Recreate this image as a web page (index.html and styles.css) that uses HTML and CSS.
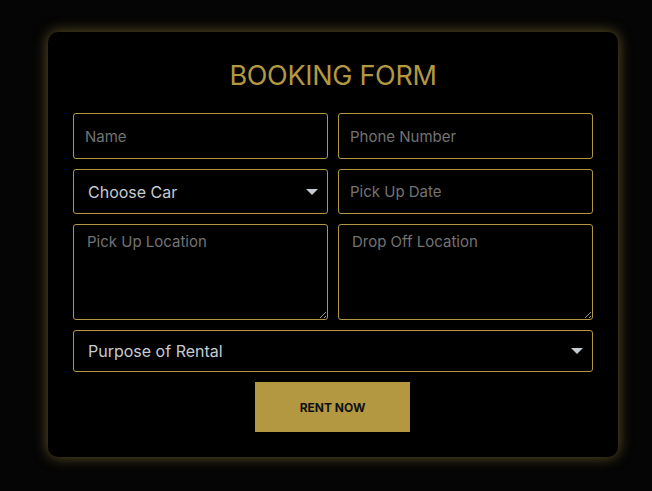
FILE: index.html
```html
<!DOCTYPE html>
<html lang="en">
<head>
    <meta charset="UTF-8">
    <meta name="viewport" content="width=device-width, initial-scale=1.0">
    <title>Booking Form</title>
    <link rel="stylesheet" href="styles.css">
</head>
<body>
    <div class="booking">
        <h2>BOOKING FORM</h2>
        <form class="booking-form">
            <input class="field row1" type="text" placeholder="Name">
            <input class="field row1" type="text" placeholder="Phone Number">
            <div class="select-wrap">
                <select class="field row2">
                    <option>Choose Car</option>
                </select>
            </div>
            <input class="field row2" type="text" placeholder="Pick Up Date">
            <textarea class="field area" placeholder="Pick Up Location"></textarea>
            <textarea class="field area" placeholder="Drop Off Location"></textarea>
            <div class="select-wrap wide">
                <select class="field row4">
                    <option>Purpose of Rental</option>
                </select>
            </div>
            <div class="actions wide">
                <button type="button" class="rent-btn">RENT NOW</button>
            </div>
        </form>
    </div>
</body>
</html>
```

FILE: styles.css
```css
body {
    margin: 0;
    background: #050505;
    font-family: 'Inter', 'Roboto', sans-serif;
    height: 491px;
    overflow: hidden;
}
.booking {
    width: 570px;
    box-sizing: border-box;
    margin: 32px 0 0 48px;
    padding: 0 25px 25px;
    background: #000;
    border-radius: 10px;
    box-shadow: 0 0 14px rgba(179, 152, 65, 0.55);
}
h2 {
    margin: 0;
    padding: 28px 0 21px;
    text-align: center;
    font-size: 27px;
    font-weight: 400;
    line-height: 32px;
    color: #b39841;
    letter-spacing: -0.3px;
}
.booking-form {
    display: grid;
    grid-template-columns: 255px 255px;
    gap: 10px;
}
.field {
    box-sizing: border-box;
    width: 100%;
    background: #000;
    border: 1px solid #b39841;
    border-radius: 3px;
    color: #c9ccd1;
    font-family: inherit;
    font-size: 15px;
    padding: 0 11px;
    outline: none;
}
.field::placeholder {
    color: #737373;
}
.row1 {
    height: 46px;
}
.row2 {
    height: 45px;
}
.area {
    height: 96px;
    padding: 7px 13px;
    resize: vertical;
}
.row4 {
    height: 42px;
}
select.field {
    appearance: none;
    -webkit-appearance: none;
    font-size: 16px;
    padding: 0 14px;
    color: #c6cbd2;
}
.select-wrap {
    position: relative;
}
.select-wrap::after {
    content: "";
    position: absolute;
    right: 10px;
    top: 50%;
    margin-top: -3px;
    border-left: 6px solid transparent;
    border-right: 6px solid transparent;
    border-top: 6px solid #c6cbd2;
    pointer-events: none;
}
.wide {
    grid-column: 1 / 3;
}
.actions {
    display: flex;
    justify-content: center;
}
.rent-btn {
    width: 155px;
    height: 50px;
    margin-left: -1px;
    background: #b39841;
    border: none;
    color: #111;
    font-family: inherit;
    font-size: 12px;
    font-weight: 700;
    cursor: pointer;
}
```
